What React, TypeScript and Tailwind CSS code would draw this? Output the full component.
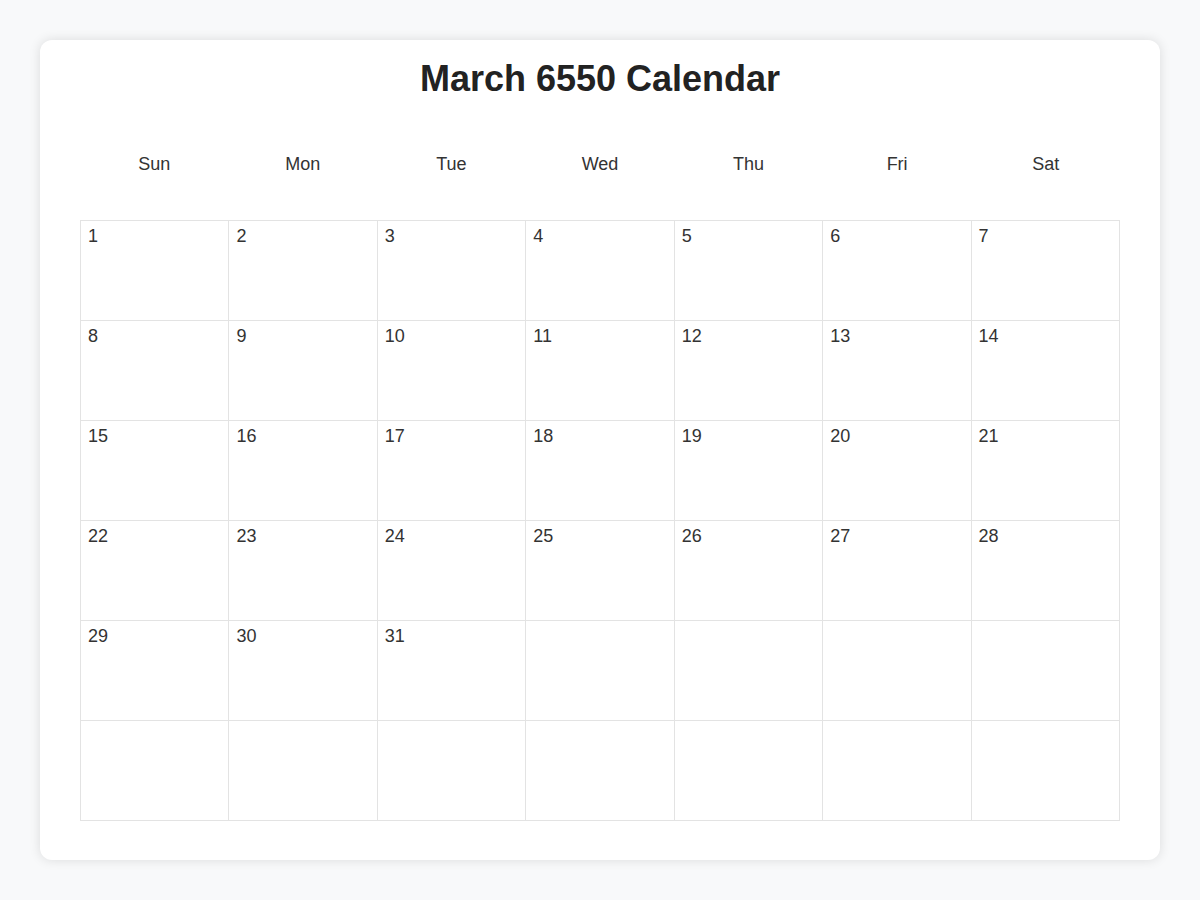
import React from "react";

const days = ["Sun", "Mon", "Tue", "Wed", "Thu", "Fri", "Sat"];

export default function App() {
  const cells: (number | null)[] = [];
  for (let i = 1; i <= 31; i++) cells.push(i);
  while (cells.length < 42) cells.push(null);

  return (
    <div
      className="min-h-[900px] w-full bg-[#f8f9fa] pt-[40px] px-[40px]"
      style={{ fontFamily: '"Liberation Sans", Arial, Helvetica, sans-serif' }}
    >
      <div className="rounded-[12px] bg-white px-[40px] pt-[18px] pb-[39px] shadow-[0_0_12px_rgba(0,0,0,0.12)]">
        <h1 className="m-0 text-center text-[36px] font-bold leading-[41px] text-[#222]">
          March 6550 Calendar
        </h1>
        <div className="mt-[55px] grid grid-cols-7">
          {days.map((d) => (
            <div key={d} className="text-center text-[18px] leading-[21px] text-[#333]">
              {d}
            </div>
          ))}
        </div>
        <div className="mt-[45px] grid grid-cols-7 border-l border-t border-[#e3e3e3]">
          {cells.map((n, i) => (
            <div
              key={i}
              className="h-[100px] border-b border-r border-[#e3e3e3] pl-[7px] pr-[5px] pt-[5px] text-[18px] leading-[21px] text-[#333]"
            >
              {n ?? ""}
            </div>
          ))}
        </div>
      </div>
    </div>
  );
}
